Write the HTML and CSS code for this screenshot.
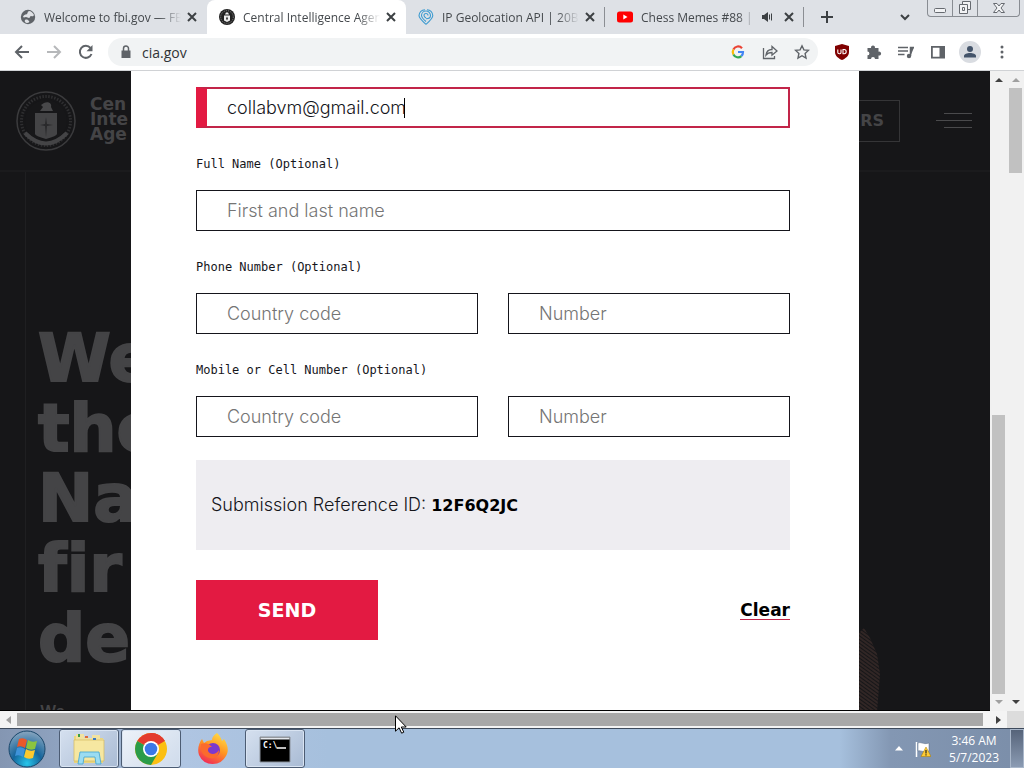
FILE: index.html
```html
<!DOCTYPE html>
<html lang="en">
<head>
<meta charset="utf-8">
<title>Central Intelligence Agency</title>
<link rel="stylesheet" href="styles.css">
</head>
<body class="desktop">
<header class="tabstrip">
  <div class="tab">
    <svg class="favicon" viewBox="0 0 16 16"><circle cx="8" cy="8" r="7.2" fill="#5f6368"/><path d="M3 8c1-3 3-2 4-3s0-2 2-3c2 0 4 2 5 4-1 2-2 1-3 1s-1 2-2 2-2-1-3-1-2 1-3 0zM5 11c2-1 3 0 4 1s-1 2-2 2-3-1-2-3z" fill="#dfe1e5"/></svg>
    <span class="tab-title">Welcome to fbi.gov — FB</span>
    <button class="tab-close" aria-label="Close tab"><svg viewBox="0 0 14 14"><path d="M3 3l8 8M11 3l-8 8"/></svg></button>
  </div>
  <div class="tab active">
    <svg class="favicon" viewBox="0 0 16 16"><circle cx="8" cy="8" r="8" fill="#222"/><circle cx="8" cy="8" r="6.3" fill="none" stroke="#999" stroke-width=".8" stroke-dasharray="1 1"/><path d="M5 6.500h6v5l-3 1.500-3-1.500zM6 5.500l1-2h2l1 2z" fill="#eee"/><path d="M8 7.500l1 2-1 2-1-2z" fill="#333"/></svg>
    <span class="tab-title">Central Intelligence Agen</span>
    <button class="tab-close" aria-label="Close tab"><svg viewBox="0 0 14 14"><path d="M3 3l8 8M11 3l-8 8"/></svg></button>
  </div>
  <div class="tab ruled">
    <svg class="favicon" viewBox="0 0 16 16" fill="none" stroke="#3d9bd0" stroke-width="1.100"><path d="M8 15.300C3 11 1 9 1 6.500A6.500 6.500 0 0 1 7 .8"/><path d="M8 15.300c5-4.300 6.800-6.300 6.800-8.800A6.500 6.500 0 0 0 9 .8"/><path d="M8 12.500C5 10 3.500 8.500 3.500 6.500a4.500 4.500 0 0 1 9 0c0 2-2 3.300-4.500 3.300"/><path d="M8 9C6.500 8 6 7.500 6 6.500a2 2 0 0 1 4 0"/></svg>
    <span class="tab-title">IP Geolocation API | 20B+</span>
    <button class="tab-close" aria-label="Close tab"><svg viewBox="0 0 14 14"><path d="M3 3l8 8M11 3l-8 8"/></svg></button>
  </div>
  <div class="tab ruled">
    <svg class="favicon" viewBox="0 0 16 16"><rect y="2.500" width="16" height="11" rx="2.500" fill="#f00"/><path d="M6.300 5.500v5l4.200-2.500z" fill="#fff"/></svg>
    <span class="tab-title">Chess Memes #88 | W</span>
    <svg class="audio" viewBox="0 0 14 14"><path d="M2 5v4h2l4 3V2L4 5z" fill="#3c4043"/><path d="M9.500 4.500v5M11.500 3.500v7" stroke="#3c4043"/></svg>
    <button class="tab-close" aria-label="Close tab"><svg viewBox="0 0 14 14"><path d="M3 3l8 8M11 3l-8 8"/></svg></button>
  </div>
  <button class="new-tab" aria-label="New tab"><svg viewBox="0 0 16 16"><path d="M8 2v12M2 8h12"/></svg></button>
  <button class="tab-search" aria-label="Search tabs"><svg viewBox="0 0 16 16"><path d="M4 6l4 4 4-4"/></svg></button>
  <div class="window-controls">
    <button aria-label="Minimize"><svg viewBox="0 0 16 16"><rect x="2.500" y="8.500" width="11" height="4" rx="1"/></svg></button>
    <button aria-label="Restore"><svg viewBox="0 0 16 16"><path d="M5.500 4.500v-3h8v8h-3"/><path d="M2.500 4.500h8v9h-8zM5.500 7.500h2v3h-2z"/></svg></button>
    <button class="wide" aria-label="Close"><svg viewBox="0 0 16 16"><path d="M2.500 3.500h3.500l2 2.500 2-2.500h3.500l-3.500 4.500 3.500 4.500h-3.500l-2-2.500-2 2.500h-3.500l3.500-4.500z"/></svg></button>
  </div>
</header>

<nav class="toolbar">
  <button class="tool" aria-label="Back"><svg viewBox="0 0 16 16"><path class="line" d="M15 8H2M8 2L2 8l6 6"/></svg></button>
  <button class="tool faded" aria-label="Forward"><svg viewBox="0 0 16 16"><path class="line" d="M1 8h13M8 2l6 6-6 6"/></svg></button>
  <button class="tool" aria-label="Reload"><svg viewBox="0 0 16 16"><path class="line" d="M13.500 10A6 6 0 1 1 12.500 4"/><path d="M14.500 1v6.200H8.500z"/></svg></button>
  <div class="omnibox">
    <svg class="lock" viewBox="0 0 16 16"><path d="M3.500 6.500h9V14h-9z" fill="#5f6368"/><path d="M5.500 7V4.500a2.500 2.500 0 0 1 5 0V7" fill="none" stroke="#5f6368" stroke-width="1.500"/></svg>
    <input class="url" type="text" aria-label="Address" value="cia.gov">
    <button class="tool" aria-label="Google"><svg viewBox="0 0 16 16" fill="none" stroke-width="2.200"><path d="M12 4.200A5.200 5.200 0 0 0 3.400 5.500" stroke="#ea4335"/><path d="M3.400 5.500a5.200 5.200 0 0 0 0 5" stroke="#fbbc05"/><path d="M3.400 10.500a5.200 5.200 0 0 0 8 1.600" stroke="#34a853"/><path d="M8 8h5a5.500 5.500 0 0 1-1.600 4" stroke="#4285f4"/></svg></button>
    <button class="tool" aria-label="Share"><svg viewBox="0 0 16 16" fill="none" stroke="#5f6368" stroke-width="1.300"><path d="M1.500 4v10.500h11V12"/><path d="M4 11c.5-4 3-5.500 6-5.500v-3L15 7l-5 4.200V8.500C7.500 8.500 5.500 9 4 11z"/></svg></button>
    <button class="tool" aria-label="Bookmark"><svg viewBox="0 0 16 16" fill="none" stroke="#5f6368" stroke-width="1.400"><path d="M8 1.800l1.900 4.100 4.500.5-3.300 3.100.9 4.500-4-2.300-4 2.300.9-4.500L1.600 6.400l4.500-.5z"/></svg></button>
  </div>
  <button class="tool" aria-label="uBlock Origin"><svg viewBox="0 0 16 16"><path d="M8 0l7 2v6c0 4-3.500 6.500-7 8-3.500-1.500-7-4-7-8V2z" fill="#800000"/><path d="M3.800 5.500v3q0 1.200 1.600 1.200h.4q1.200 0 1.200-1.200v-3M9 5.500v4.200h1.300q1.900 0 1.900-2.100t-1.900-2.100z" fill="none" stroke="#fff" stroke-width="1.100"/></svg></button>
  <button class="tool" aria-label="Extensions"><svg viewBox="0 0 16 16"><path d="M1.500 4h3.600a2 2 0 1 1 3.800 0h3.600v3.700a2 2 0 1 1 0 3.800v3.500H9a2 2 0 0 0-4 0H1.500v-3.700a1.900 1.900 0 0 0 0-3.800z"/></svg></button>
  <button class="tool" aria-label="Media"><svg viewBox="0 0 16 16"><path d="M0 3.500h10M0 7h10M0 10.500h6.500M12.500 12V3.500H16" stroke="#5f6368" stroke-width="1.500"/><circle cx="11" cy="12" r="2.200"/></svg></button>
  <button class="tool" aria-label="Side panel"><svg viewBox="0 0 16 16"><path d="M1 2h14v12.500H1zM2.800 3.800v9H9.500v-9z" fill-rule="evenodd"/></svg></button>
  <button class="tool" aria-label="Profile"><span class="avatar"><svg viewBox="0 0 16 16"><circle cx="8" cy="5" r="3"/><path d="M2 13.500v-1.500c0-2 3-3 6-3s6 1 6 3v1.500z"/></svg></span></button>
  <button class="tool" aria-label="Menu"><svg viewBox="0 0 16 16"><circle cx="8" cy="3" r="1.500"/><circle cx="8" cy="8" r="1.500"/><circle cx="8" cy="13" r="1.500"/></svg></button>
</nav>

<main class="viewport">
  <div class="page">
    <div class="site">
      <div class="masthead">
        <svg class="seal" viewBox="0 0 60 60">
          <circle cx="30" cy="30" r="29" fill="none" stroke="#3b3b3d" stroke-width="1.500"/>
          <circle cx="30" cy="30" r="24.500" fill="none" stroke="#2e2e30" stroke-width="3" stroke-dasharray="1.500 1.500"/>
          <circle cx="30" cy="30" r="21" fill="#171719"/>
          <path d="M19 22h22v21q0 2-11 5-11-3-11-5z" fill="#444446"/>
          <path d="M24 20l3-4-2-2 3-2c5-2 8 1 7 4l2 4z" fill="#48484a"/>
          <path d="M30 26l1 7 6 1-6 1-1 11-1-11-5-1 5-1z" fill="#29292b"/>
          <path d="M9 42q21 21 42 0" fill="none" stroke="#444446" stroke-width="4"/>
        </svg>
        <div class="agency">Cen<br>Inte<br>Age</div>
        <a class="careers" href="#">RS</a>
        <button class="burger" aria-label="Menu"><span></span><span></span><span></span></button>
      </div>
      <div class="hero">
        <h1>We<br>the<br>Na<br>fir<br>de</h1>
        <p>We</p>
        <svg class="portrait" viewBox="0 0 24 84"><defs><pattern id="lines" width="4" height="3" patternUnits="userSpaceOnUse" patternTransform="rotate(36)"><path d="M0 1h4" stroke="#4b3632"/></pattern></defs><path d="M0 6L6 0l6 10 7 16 3 20-3 38H0z" fill="url(#lines)"/></svg>
      </div>
    </div>
    <div class="overlay">
      <form class="modal">
        <input class="box focused" type="email" aria-label="Email" value="collabvm@gmail.com">
        <div class="field">
          <label for="name">Full Name (Optional)</label>
          <input class="box" id="name" type="text" placeholder="First and last name">
        </div>
        <div class="field">
          <label for="phone-code">Phone Number (Optional)</label>
          <div class="pair">
            <input class="box" id="phone-code" type="text" placeholder="Country code">
            <input class="box" type="text" aria-label="Phone number" placeholder="Number">
          </div>
        </div>
        <div class="field">
          <label for="cell-code">Mobile or Cell Number (Optional)</label>
          <div class="pair">
            <input class="box" id="cell-code" type="text" placeholder="Country code">
            <input class="box" type="text" aria-label="Cell number" placeholder="Number">
          </div>
        </div>
        <p class="reference">Submission Reference ID: <strong>12F6Q2JC</strong></p>
        <div class="actions">
          <button class="send" type="button">SEND</button>
          <a class="clear" href="#">Clear</a>
        </div>
        <span class="caret"></span>
      </form>
    </div>
  </div>
  <div class="vscroll inner">
    <svg class="arrow" viewBox="0 0 8 4"><path d="M4 0l4 4H0z" fill="#404040"/></svg>
    <div class="track"><div class="thumb low"></div></div>
    <svg class="arrow" viewBox="0 0 8 4"><path d="M0 0h8L4 4z" fill="#a0a0a0"/></svg>
  </div>
  <div class="vscroll">
    <svg class="arrow" viewBox="0 0 8 4"><path d="M4 0l4 4H0z" fill="#a0a0a0"/></svg>
    <div class="track"><div class="thumb high"></div></div>
    <svg class="arrow" viewBox="0 0 8 4"><path d="M0 0h8L4 4z" fill="#404040"/></svg>
  </div>
</main>

<div class="hscroll">
  <svg viewBox="0 0 5 8"><path d="M5 0v8L0 4z" fill="#a0a0a0"/></svg>
  <div class="hthumb"></div>
  <svg class="right" viewBox="0 0 5 8"><path d="M0 0v8l5-4z" fill="#404040"/></svg>
  <div class="corner"></div>
</div>

<footer class="taskbar">
  <button class="start" aria-label="Start">
    <svg viewBox="0 0 38 38"><defs><radialGradient id="orb" cx=".5" cy=".9" r=".9"><stop offset="0" stop-color="#27c5ea"/><stop offset=".45" stop-color="#14659c"/><stop offset="1" stop-color="#8aa6bf"/></radialGradient></defs><circle cx="19" cy="19" r="18" fill="url(#orb)" stroke="#19476b"/><path d="M11 9q4-2 8 1l-2 8q-4-3-8-1z" fill="#e9592a"/><path d="M20 10q4 3 9 1l-2 8q-5 2-9-1z" fill="#8bc43f"/><path d="M9 18q4-2 8 1l-2 8q-4-3-8-1z" fill="#3f93d9"/><path d="M18 19q4 3 9 1l-2 8q-5 2-9-1z" fill="#fbc92f"/></svg>
  </button>
  <button class="task framed" aria-label="Explorer">
    <svg viewBox="0 0 34 34"><path d="M2 4h9l2 2h18v25H2z" fill="#ead57d"/><path d="M4 2h8v4h8V3h8v4h4v22H4z" fill="#f1e2a0"/><path d="M2 8h30v21H2z" fill="#f6e7a1" stroke="#d3b95e" stroke-width=".7"/><path d="M6 2h2v3H6z" fill="#3a9c46"/><path d="M13 4h3v2h-3z" fill="#dc6b3e"/><path d="M21 6h3v2h-3z" fill="#3878c4"/><path d="M6 32l2-12h19l2 12h-5l-1-7H12l-1 7z" fill="#9bdcf2" stroke="#4ca9d2" stroke-width=".9"/></svg>
  </button>
  <button class="task framed current" aria-label="Chrome">
    <svg viewBox="0 0 34 34"><circle cx="17" cy="17" r="16" fill="#fbbf12"/><path d="M17 17L3.200 9A16 16 0 0 1 30.800 9z" fill="#e33b2e"/><path d="M17 1a16 16 0 0 1 13.800 8H17z" fill="#e33b2e"/><path d="M3.200 9A16 16 0 0 0 17 33l7-12-7-4z" fill="#2a9c4a"/><circle cx="17" cy="17" r="8" fill="#fff"/><circle cx="17" cy="17" r="6.300" fill="#3b78e7"/></svg>
  </button>
  <button class="task" aria-label="Firefox">
    <svg viewBox="0 0 34 34"><defs><linearGradient id="fox" x1=".8" y1="0" x2=".3" y2="1"><stop offset="0" stop-color="#ffe14a"/><stop offset=".5" stop-color="#ff9321"/><stop offset="1" stop-color="#f22a58"/></linearGradient></defs><path d="M21 1c3 3 4 5 5 8l2-2c4 6 5 12 2 17A15 15 0 0 1 3 23C1 17 3 11 6 7l2 4 3-2 5-1c0-3 2-5 5-7z" fill="url(#fox)"/><circle cx="17" cy="18" r="7" fill="#7b39cf"/><path d="M5 12c5-2 8 0 11 3-4 0-4 2-4 4 2 4 8 4 11-1 0 7-5 9-9 8-6-1-10-6-9-14z" fill="#fb6b2d"/></svg>
  </button>
  <button class="task framed" aria-label="Command Prompt">
    <svg viewBox="0 0 34 34"><path d="M2 5h30v25H2z" fill="#000" stroke="#8b929b"/><path d="M2.500 5.500h29v2h-29z" fill="#e4e8ed"/><text x="5" y="16" class="prompt">C:\</text><path d="M19 16h9" stroke="#fff" stroke-width="1.500"/></svg>
  </button>
  <div class="tray">
    <svg class="up" viewBox="0 0 8 5"><path d="M4 0l4 4.500H0z" fill="#fff"/></svg>
    <svg class="flag" viewBox="0 0 16 16"><path d="M1.500 1v15" stroke="#fff" stroke-width="1.500"/><path d="M3 2c3-1.500 5 2 11 0v8c-5 2-8-1-11 0z" fill="#fff" stroke="#566883" stroke-width=".5"/><path d="M11 6l5 9.500H6z" fill="#fc3" stroke="#a87b00" stroke-width=".5"/><path d="M11 9v3.500M11 13.300v1.200" stroke="#222" stroke-width="1.200"/></svg>
    <div class="clock">3:46 AM<br>5/7/2023</div>
  </div>
  <button class="show-desktop" aria-label="Show desktop"></button>
</footer>
<svg class="pointer" viewBox="0 0 12 19"><path d="M.5.8v15.400l3.600-3.400 2.500 5.400 2.200-1-2.500-5.200h4.900z" fill="#fff" stroke="#000"/></svg>
</body>
</html>
```

FILE: styles.css
```css
* { box-sizing: border-box; }

button {
  padding: 0;
  border: 0;
  background: none;
  font: inherit;
  color: inherit;
}

svg { display: block; }

.desktop {
  position: relative;
  display: grid;
  grid-template-rows: auto auto minmax(0, 1fr) auto auto;
  grid-template-columns: minmax(0, 1fr);
  height: 100vh;
  margin: 0;
  overflow: hidden;
  font-family: "Open Sans", "Noto Sans", sans-serif;
  font-size: 12px;
}

/* Tab strip */
.tabstrip {
  display: flex;
  align-items: center;
  height: 34px;
  padding: 0 4px 0 8px;
  background: #dee1e6;
  color: #45494d;
}

.tab {
  display: flex;
  flex: 0 1 199px;
  align-items: center;
  gap: 8px;
  min-width: 0;
  height: 34px;
  padding: 0 8px 0 12px;
}

.tab.active {
  border-radius: 8px 8px 0 0;
  background: #fff;
}

.tab.ruled {
  background: linear-gradient(#8b8e93, #8b8e93) right center / 1px 20px no-repeat;
}

.favicon { flex: none; width: 16px; height: 16px; }

.tab-title {
  flex: 1;
  min-width: 0;
  margin-right: -4px;
  overflow: hidden;
  white-space: nowrap;
  mask-image: linear-gradient(to right, #000 84%, transparent);
}

.audio { flex: none; width: 14px; height: 14px; }

.tab-close svg {
  width: 14px;
  height: 14px;
  stroke: #3c4043;
  stroke-width: 2;
}

.new-tab { margin-left: 15px; }

.new-tab svg,
.tab-search svg {
  width: 16px;
  height: 16px;
  fill: none;
  stroke: #3c4043;
  stroke-width: 2;
}

.tab-search { margin: 0 14px 0 auto; }

.window-controls {
  display: flex;
  align-self: flex-start;
  height: 17px;
  border: 1px solid #888c92;
  border-top: 0;
  border-radius: 0 0 4px 4px;
}

.window-controls button {
  display: flex;
  align-items: center;
  justify-content: center;
  width: 25px;
  border-right: 1px solid #888c92;
}

.window-controls .wide { width: 41px; border: 0; }

.window-controls svg {
  width: 16px;
  height: 16px;
  fill: #f2f3f5;
  stroke: #666a70;
}

/* Toolbar */
.toolbar {
  display: flex;
  align-items: center;
  height: 37px;
  padding: 0 6px;
  border-bottom: 1px solid #d0d2d5;
  background: #fff;
}

.tool {
  display: flex;
  flex: none;
  align-items: center;
  justify-content: center;
  width: 32px;
  height: 28px;
}

.tool svg { width: 16px; height: 16px; fill: #5f6368; }
.tool svg[fill="none"] { fill: none; }
.tool .line { fill: none; stroke: #5f6368; stroke-width: 2; }
.faded { opacity: .45; }

.omnibox {
  display: flex;
  flex: 1;
  align-items: center;
  height: 28px;
  margin: 0 8px 0 6px;
  padding-left: 10px;
  border-radius: 14px;
  background: #f1f3f4;
}

.lock { width: 16px; height: 16px; }

.url {
  flex: 1;
  min-width: 0;
  padding: 0 8px;
  border: 0;
  background: none;
  color: #303336;
  font: 14px "Open Sans", "Noto Sans", sans-serif;
}

.avatar {
  display: grid;
  place-items: center;
  width: 22px;
  height: 22px;
  border-radius: 50%;
  background: #d9dce1;
}

.tool .avatar svg { fill: #44546a; }

/* Page behind the dialog */
.viewport { display: flex; min-height: 0; }

.page {
  position: relative;
  flex: 1;
  min-width: 0;
  overflow: hidden;
  background: #161618;
  color: #444446;
  font-family: Inter, "Liberation Sans", sans-serif;
}

.masthead {
  display: flex;
  align-items: center;
  height: 101px;
  padding: 0 18px 0 16px;
  border-bottom: 2px solid #1b1b1d;
}

.seal { width: 60px; height: 60px; }

.agency {
  margin-left: 14px;
  padding-bottom: 2px;
  font: bold 17px/15px "DejaVu Sans", sans-serif;
}

.careers {
  margin-left: auto;
  padding: 12px 15px;
  border: 1px solid #353537;
  color: inherit;
  font: bold 16px/16px "DejaVu Sans", sans-serif;
  text-align: right;
  text-decoration: none;
}

.burger {
  display: grid;
  gap: 6px;
  justify-items: end;
  width: 36px;
  margin-left: 36px;
}

.burger span { width: 28px; height: 1px; background: #4a4a4c; }
.burger span:nth-child(2) { width: 36px; }

.hero {
  position: relative;
  height: 540px;
  margin-left: 25px;
  padding: 152px 0 0 12px;
  border-left: 1px solid #1f1f21;
}

.hero h1 {
  margin: 0;
  font: bold 66px/70px "DejaVu Sans", sans-serif;
  font-variant-ligatures: none;
  -webkit-text-stroke: 2px #444446;
}

.hero p {
  margin: 27px 0 0 2px;
  font-size: 16px;
  font-weight: 600;
}

.portrait {
  position: absolute;
  right: 108px;
  bottom: 0;
  width: 24px;
  height: 84px;
}

/* Dialog */
.overlay {
  position: absolute;
  inset: 0;
  display: flex;
  justify-content: center;
  border-bottom: 1px solid #000;
}

.modal {
  position: relative;
  display: flex;
  flex-direction: column;
  gap: 26px;
  width: 728px;
  max-width: 100%;
  padding: 16px 69px 0 65px;
  background: #fff;
  color: #15151b;
}

.field { display: grid; gap: 16px; }

.field label {
  font: 12px/20px "DejaVu Sans Mono", monospace;
}

.pair {
  display: grid;
  grid-template-columns: 1fr 1fr;
  gap: 30px;
}

.box {
  width: 100%;
  height: 41px;
  padding: 0 30px;
  border: 1px solid #15151b;
  border-radius: 0;
  outline: 0;
  background: #fff;
  color: #15151b;
  font: 300 18px Inter, "Liberation Sans", sans-serif;
}

.box::placeholder { color: #757575; opacity: 1; }

.focused {
  padding-left: 20px;
  border: 2px solid #c22549;
  border-left: 11px solid #e31a42;
}

.caret {
  position: absolute;
  top: 27px;
  left: 273px;
  width: 1px;
  height: 20px;
  background: #000;
}

.reference {
  margin: -3px 0 0;
  padding: 32px 15px;
  background: #eeedf1;
  font-size: 18px;
  font-weight: 300;
  line-height: 25px;
}

.reference strong {
  color: #000;
  font: bold 16px/24px "DejaVu Sans", sans-serif;
}

.actions {
  display: flex;
  align-items: center;
  justify-content: space-between;
  margin-top: 4px;
}

.send {
  width: 182px;
  height: 60px;
  background: #e31a42;
  color: #fff;
  font: bold 19px "DejaVu Sans", sans-serif;
}

.clear {
  border-bottom: 1px solid #c22549;
  color: #000;
  font: bold 17px/18px "DejaVu Sans", sans-serif;
  text-decoration: none;
}

/* Scroll bars */
.vscroll {
  display: flex;
  flex-direction: column;
  align-items: center;
  width: 17px;
  padding: 7px 2px;
  background: #f1f1f1;
}

.arrow { width: 8px; height: 4px; }

.track {
  display: flex;
  flex: 1;
  flex-direction: column;
  width: 13px;
  padding: 6px 0;
}

.thumb { background: #c1c1c1; }
.thumb.low { height: 46%; margin-top: auto; }
.thumb.high { height: 14%; }

.hscroll {
  display: flex;
  align-items: center;
  height: 17px;
  padding-left: 6px;
  background: #f4f4f4;
}

.hscroll svg { width: 5px; height: 8px; }

.hthumb {
  flex: 1;
  height: 13px;
  margin: 0 13px 0 6px;
  background: #a8a8a8;
}

.corner {
  width: 17px;
  height: 17px;
  margin-left: 6px;
  background: #dcdcdc;
}

/* Taskbar */
.taskbar {
  display: flex;
  height: 40px;
  border-top: 1px solid #3d4a5c;
  background: linear-gradient(to right, #8496b2, #8fa3c0 6%, #afc5e2 18%, #a6c0dd 32%, #a6c0dd 82%, #8397b3 87%, #7b8ea9);
}

.start { width: 54px; margin-right: 5px; }
.start svg { width: 38px; height: 38px; margin: auto; }

.task {
  display: grid;
  place-items: center;
  width: 60px;
  margin-right: 2px;
}

.framed {
  border: 1px solid #4c5c73;
  border-radius: 3px;
  background: linear-gradient(135deg, #d5e0ef, #a9bbd4);
  box-shadow: inset 0 0 0 1px #d9e4f2;
}

.current { background: linear-gradient(135deg, #edf2f9, #cfdbeb); }
.task svg { width: 34px; height: 34px; }

.prompt {
  fill: #fff;
  font: bold 8px "DejaVu Sans Mono", monospace;
}

.tray {
  display: flex;
  align-items: center;
  margin-left: auto;
  color: #fff;
}

.up { width: 8px; height: 5px; }
.flag { width: 16px; height: 16px; margin: 0 18px 0 12px; }

.clock {
  font-size: 12px;
  line-height: 17px;
  text-align: center;
}

.show-desktop {
  width: 14px;
  margin-left: 11px;
  border: 1px solid #a9b7ca;
  background: linear-gradient(#56647a, #8b9bb3);
}

.pointer {
  position: absolute;
  top: 715px;
  left: 395px;
  width: 12px;
  height: 19px;
}
```
